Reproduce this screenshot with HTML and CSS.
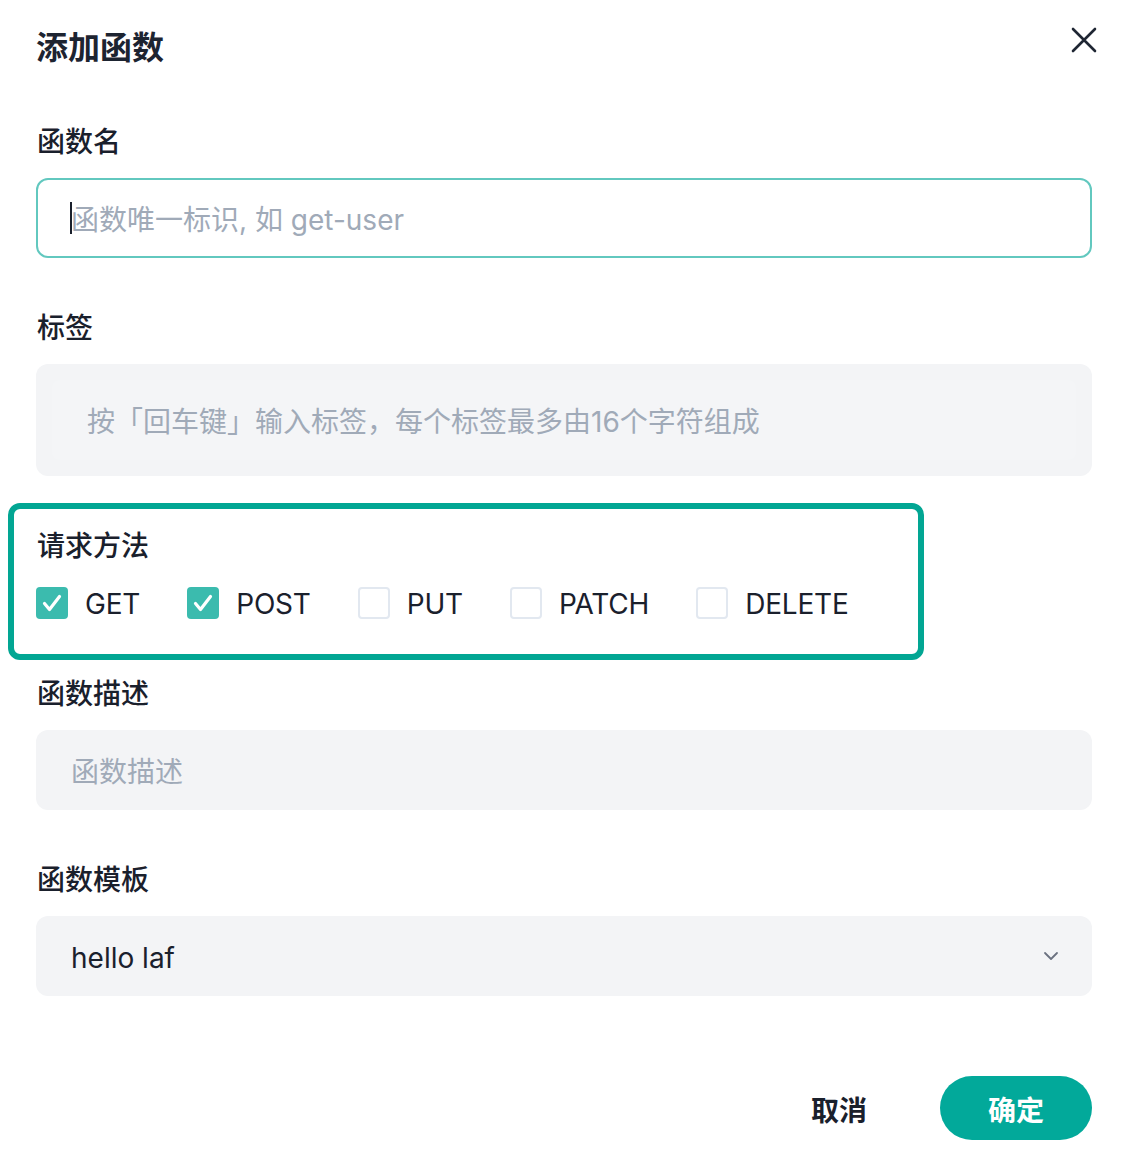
FILE: index.html
```html
<!DOCTYPE html>
<html lang="zh-CN">
<head>
<meta charset="utf-8">
<title>添加函数</title>
<link rel="stylesheet" href="styles.css">
</head>
<body>
<div class="modal">
  <header class="header">
    <h2 class="title">添加函数</h2>
    <button class="close" aria-label="关闭">
      <svg width="26" height="26" viewBox="0 0 26 26"><path d="M2 2 L24 24 M24 2 L2 24" stroke="#1f2633" stroke-width="2.6" stroke-linecap="round" fill="none"/></svg>
    </button>
  </header>

  <div class="field first">
    <div class="label">函数名</div>
    <div class="input focused">
      <span class="caret"></span>
      <input type="text" placeholder="函数唯一标识, 如 get-user">
    </div>
  </div>

  <div class="field">
    <div class="label">标签</div>
    <div class="tags">
      <div class="tags-inner"><input type="text" placeholder="按「回车键」输入标签，每个标签最多由16个字符组成"></div>
    </div>
  </div>

  <div class="methods">
    <div class="label">请求方法</div>
    <div class="checks">
      <label class="check"><span class="box checked"><svg width="32" height="32" viewBox="0 0 32 32"><path d="M8.5 16.5 L13.5 22.5 L23.5 9.5" stroke="#fff" stroke-width="3.2" fill="none" stroke-linecap="round" stroke-linejoin="round"/></svg></span><span class="ctext">GET</span></label>
      <label class="check"><span class="box checked"><svg width="32" height="32" viewBox="0 0 32 32"><path d="M8.5 16.5 L13.5 22.5 L23.5 9.5" stroke="#fff" stroke-width="3.2" fill="none" stroke-linecap="round" stroke-linejoin="round"/></svg></span><span class="ctext">POST</span></label>
      <label class="check"><span class="box"></span><span class="ctext">PUT</span></label>
      <label class="check"><span class="box"></span><span class="ctext">PATCH</span></label>
      <label class="check"><span class="box"></span><span class="ctext">DELETE</span></label>
    </div>
  </div>

  <div class="field after-methods">
    <div class="label">函数描述</div>
    <div class="input filled"><input type="text" placeholder="函数描述"></div>
  </div>

  <div class="field">
    <div class="label">函数模板</div>
    <div class="input filled select">
      <span class="value">hello laf</span>
      <svg class="chev" width="16" height="10" viewBox="0 0 16 10"><path d="M2 2 L8 8 L14 2" stroke="#6b7280" stroke-width="1.8" fill="none" stroke-linecap="round" stroke-linejoin="round"/></svg>
    </div>
  </div>

  <footer class="footer">
    <button class="btn ghost">取消</button>
    <button class="btn primary">确定</button>
  </footer>
</div>
</body>
</html>
```

FILE: styles.css
```css
* { box-sizing: border-box; }
html, body { margin: 0; padding: 0; background: #fff; }
body {
  font-family: "Inter", "Noto Sans CJK SC", sans-serif;
  color: #1a202c;
}
.modal {
  width: 1132px;
  padding: 24px 40px 0 36px;
}
.header {
  display: flex;
  justify-content: space-between;
  align-items: flex-start;
}
.title {
  margin: 0;
  font-size: 32px;
  line-height: 48px;
  font-weight: 700;
  color: #1d2431;
}
.close {
  border: 0;
  background: none;
  padding: 0;
  margin: 3px -5px 0 0;
  width: 26px;
  height: 26px;
  cursor: pointer;
}
.close svg { display: block; }

.field { margin-top: 52px; }
.field.after-methods { margin-top: 16px; }
.label {
  font-size: 28px;
  line-height: 36px;
  font-weight: 500;
  color: #1a202c;
  margin-bottom: 18px;
  padding-left: 1px;
}
.input {
  position: relative;
  height: 80px;
  border-radius: 12px;
  display: flex;
  align-items: center;
  padding: 3px 35px 0;
}
.input input, .tags input {
  border: 0;
  outline: none;
  background: transparent;
  font-family: "Inter", "Noto Sans CJK SC", sans-serif;
  font-size: 28px;
  color: #1a202c;
  width: 100%;
  padding: 0;
}
.input input::placeholder, .tags input::placeholder {
  color: #a0aab8;
}
.input.focused {
  border: 2px solid #62c8bf;
  padding: 3px 33px 0;
}
.caret {
  position: absolute;
  left: 32px;
  top: 22px;
  width: 2px;
  height: 32px;
  background: #1a202c;
}
.input.filled { background: #f3f4f6; }

.tags {
  height: 112px;
  border-radius: 12px;
  background: #f3f4f6;
  padding: 16px 16px;
}
.tags-inner {
  height: 80px;
  border-radius: 8px;
  background: #f4f5f7;
  display: flex;
  align-items: center;
  padding: 3px 35px 0;
}

.methods {
  margin: 27px 0 0 -28px;
  width: 916px;
  border: 6px solid #02a693;
  border-radius: 12px;
  padding: 19px 22px 35px 22px;
}
.methods .label { margin-bottom: 23px; }
.checks {
  display: flex;
  align-items: center;
  gap: 47px;
}
.check {
  display: flex;
  align-items: center;
  height: 32px;
}
.box {
  width: 32px;
  height: 32px;
  border: 2px solid #e2e8f0;
  border-radius: 4px;
  margin-right: 17px;
  display: flex;
  align-items: center;
  justify-content: center;
}
.box.checked {
  border: 0;
  background: #3bbbae;
}
.box svg { display: block; }
.ctext {
  font-size: 28px;
  line-height: 32px;
  color: #1a202c;
  padding-top: 2px;
  letter-spacing: -0.2px;
}

.select { justify-content: space-between; }
.select .value { font-size: 28px; color: #1a202c; }
.chev { display: block; margin-right: -2px; margin-top: -3px; }

.footer {
  margin-top: 80px;
  display: flex;
  justify-content: flex-end;
  align-items: center;
}
.btn {
  height: 64px;
  border: 0;
  font-family: "Inter", "Noto Sans CJK SC", sans-serif;
  font-size: 28px;
  font-weight: 700;
  cursor: pointer;
  padding-top: 2px;
}
.btn.ghost {
  background: none;
  color: #1a202c;
  padding: 2px 32px 0;
  margin-right: 41px;
}
.btn.primary {
  width: 152px;
  border-radius: 32px;
  background: #02a99a;
  color: #fff;
}
```
